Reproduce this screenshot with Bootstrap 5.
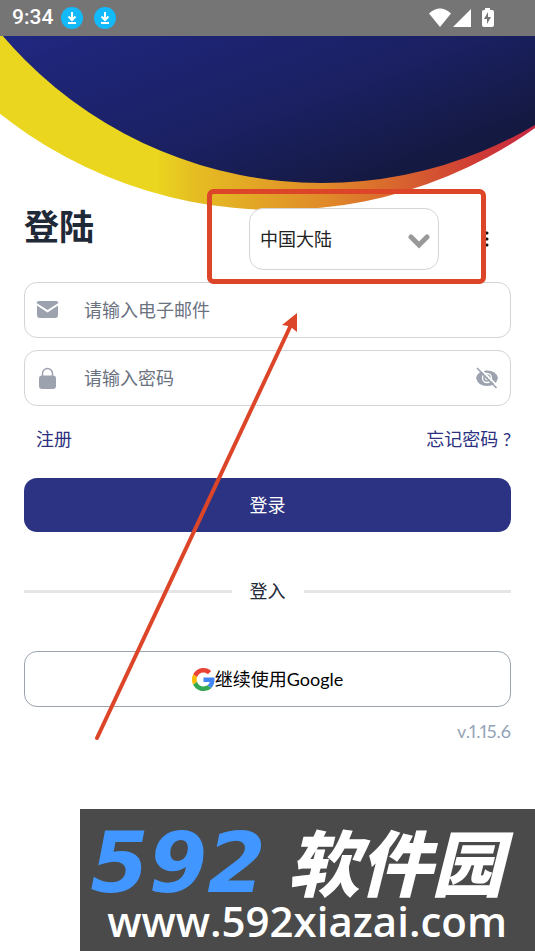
<!DOCTYPE html>
<html lang="zh-CN">
<head>
<meta charset="utf-8">
<meta name="viewport" content="width=device-width, initial-scale=1">
<title>登陆</title>
<link href="https://cdn.jsdelivr.net/npm/bootstrap@5.3.0/dist/css/bootstrap.min.css" rel="stylesheet">
<style>
body { font-family: Lato, "Noto Sans CJK SC", sans-serif; font-size: 18px; color: #1f2937; background: #fff; }
.status-strip { background: #757575; height: 36px; padding: 0 40px 0 12px; font-family: Roboto, sans-serif; font-size: 21px; font-weight: 500; }
.hero-arc { position: absolute; top: 0; left: 0; width: 100%; z-index: 0; }
.screen-body { padding: 172px 24px 0; z-index: 1; }
.page-title { font-size: 35px; line-height: 36px; font-weight: 700; }
.region-wrap { margin-right: 72px; }
.region-select { display: block; width: 190px; height: 62px; padding: 0 0 0 10px; border: 1px solid #d5d5d9; border-radius: 14px; font-size: 18px; color: #222; background: #fff; appearance: none; }
.chevron { position: absolute; right: 9px; top: 26px; pointer-events: none; }
.more-btn { position: absolute; right: 16px; top: 20px; }
.field { height: 56px; margin-top: 12px; border: 1px solid #d1d5d9; border-radius: 13px; padding: 0 12px 0 11px; background: #fff; }
.field input { font-size: 18px; margin-left: 25px; }
.field input::placeholder { color: #6b7280; opacity: 1; }
.auth-links { padding-left: 12px; margin-top: 19px; line-height: 28px; }
.auth-links a { color: #2b3180; }
.login-btn { height: 54px; margin-top: 25px; border-radius: 13px; background: #2c3382; color: #fff; font-size: 18px; }
.login-btn:hover { background: #232970; color: #fff; }
.divider { margin-top: 45px; line-height: 28px; gap: 18px; }
.divider-line { height: 3px; background: #e5e5e8; }
.google-btn { height: 56px; margin-top: 46px; border: 1px solid #9ca3af; border-radius: 13px; font-size: 18px; color: #000; background: #fff; }
.version { margin-top: 10px; line-height: 28px; color: #94a3b8; font-variant-numeric: proportional-nums; }
.notes { position: absolute; top: 0; left: 0; width: 100%; z-index: 3; pointer-events: none; }
.brand-strip { width: 85%; height: 142px; background: #4a4a4a; color: #fff; padding: 20px 0 0 10px; }
.brand-name { font-size: 72px; line-height: 68px; font-weight: 900; font-style: italic; gap: 22px; }
.brand-num { color: #4197ff; font-family: "DejaVu Sans", sans-serif; font-size: 84px; }
.brand-url { font-family: "Open Sans", sans-serif; font-size: 42px; line-height: 48px; font-weight: 600; padding-left: 17px; }
</style>
</head>
<body>
<div class="position-relative min-vh-100 d-flex flex-column overflow-hidden">
  <header class="status-strip d-flex align-items-center text-white">
    <span>9:34</span>
    <svg class="ms-2" width="55" height="22" viewBox="0 0 55 22" aria-hidden="true">
      <g id="dl"><circle cx="11" cy="11" r="11" fill="#12b9fb"/><path d="M11 5v8M7.500 9.500l3.500 3.500L14.500 9.500M7 16h8" fill="none" stroke="#fff" stroke-width="2"/></g>
      <use href="#dl" x="33"/>
    </svg>
    <svg class="ms-auto" width="66" height="22" viewBox="0 0 66 22" fill="#fff" aria-hidden="true">
      <path d="M0 6.500Q11-3.500 22 6.500L11 20zM24 20L42 2v18z"/>
      <path fill-rule="evenodd" d="M56 1h5v2h2q2 0 2 2v13q0 2-2 2h-8q-2 0-2-2V5q0-2 2-2h1zM59 5l-4 7h3v5l4-7h-3z"/>
    </svg>
  </header>

  <main class="position-relative">
    <svg class="hero-arc" viewBox="0 0 535 175" aria-hidden="true">
      <defs>
        <linearGradient id="ring" gradientUnits="userSpaceOnUse" x1="155" y1="0" x2="535" y2="0"><stop offset="0" stop-color="#ebd61f"/><stop offset=".1" stop-color="#e5be22"/><stop offset=".45" stop-color="#e08a29"/><stop offset=".85" stop-color="#cf3b34"/><stop offset="1" stop-color="#c62843"/></linearGradient>
        <linearGradient id="disc" gradientUnits="userSpaceOnUse" x1="180" y1="-60" x2="270" y2="180"><stop offset="0" stop-color="#20277f"/><stop offset=".65" stop-color="#1a2060"/><stop offset="1" stop-color="#141942"/></linearGradient>
      </defs>
      <circle cx="277" cy="-273" r="447" fill="url(#ring)"/>
      <circle cx="322" cy="-273" r="420" fill="url(#disc)"/>
    </svg>

    <form class="screen-body position-relative" onsubmit="return false">
      <div class="position-relative d-flex justify-content-between align-items-start">
        <h1 class="page-title mb-0">登陆</h1>
        <div class="region-wrap position-relative">
          <select class="region-select" aria-label="地区"><option>中国大陆</option></select>
          <svg class="chevron" width="22" height="16" viewBox="0 0 22 16" aria-hidden="true"><path d="M3 3l8 8 8-8" fill="none" stroke="#999" stroke-width="5" stroke-linecap="round"/></svg>
        </div>
        <button type="button" class="more-btn btn p-0 border-0 d-flex" aria-label="更多"><svg width="16" height="22" viewBox="0 0 16 22"><path d="M6 5h2M6 11h2M6 17h2" stroke="#111" stroke-width="3" stroke-linecap="round"/></svg></button>
      </div>

      <label class="field d-flex align-items-center" for="email">
        <svg class="flex-shrink-0" width="23" height="18" viewBox="0 0 23 18" aria-hidden="true"><path fill="#9ca3af" d="M3 0h17q2 0 2.500 2L11.500 9 .5 2Q1 0 3 0zM1 4.500L11.500 11.500 22 4.500V14q0 3-3 3H4q-3 0-3-3z"/></svg>
        <input id="email" type="email" class="form-control border-0 shadow-none p-0 bg-transparent" placeholder="请输入电子邮件">
      </label>
      <label class="field d-flex align-items-center" for="password">
        <svg class="flex-shrink-0" width="23" height="23" viewBox="0 0 23 23" aria-hidden="true"><path d="M6.500 11V6.500a5 5 0 0 1 10 0V11" fill="none" stroke="#9ca3af" stroke-width="1.500"/><rect x="3" y="8.500" width="17" height="13.500" rx="3" fill="#9ca3af"/></svg>
        <input id="password" type="password" class="form-control border-0 shadow-none p-0 bg-transparent" placeholder="请输入密码">
        <button type="button" class="btn p-0 border-0 d-flex" aria-label="显示密码"><svg width="22" height="22" viewBox="0 0 22 22"><path d="M0 11Q2 3.500 11 3.500T22 11q-2 8-11 8T0 11z" fill="#9ca3af"/><circle cx="11" cy="11" r="4.500" fill="none" stroke="#fff" stroke-width="1.300"/><circle cx="11" cy="11" r="1.800" fill="none" stroke="#fff"/><path d="M3 .5l19 19" stroke="#fff" stroke-width="1.800"/><path d="M1 1l19.500 20" stroke="#9ca3af" stroke-width="1.700"/></svg></button>
      </label>

      <nav class="auth-links d-flex justify-content-between" aria-label="账号">
        <a class="text-decoration-none" href="#">注册</a><a class="text-decoration-none" href="#">忘记密码 ?</a>
      </nav>
      <button type="submit" class="login-btn btn w-100 border-0 d-block">登录</button>
      <div class="divider d-flex align-items-center"><span class="divider-line flex-fill"></span><span>登入</span><span class="divider-line flex-fill"></span></div>
      <button type="button" class="google-btn btn w-100 d-flex align-items-center justify-content-center p-0">
        <svg width="23" height="23" viewBox="0 0 48 48" aria-hidden="true"><path fill="#EA4335" d="M24 9.500c3.540 0 6.710 1.220 9.210 3.600l6.850-6.850C35.900 2.380 30.470 0 24 0 14.620 0 6.510 5.380 2.560 13.220l7.980 6.190C12.430 13.720 17.740 9.500 24 9.500z"/><path fill="#4285F4" d="M46.980 24.550c0-1.570-.15-3.090-.38-4.550H24v9.020h12.940c-.58 2.960-2.260 5.480-4.780 7.180l7.730 6c4.510-4.180 7.090-10.360 7.090-17.650z"/><path fill="#FBBC05" d="M10.530 28.590A14.500 14.500 0 0 1 10.530 19.410l-7.980-6.190A24 24 0 0 0 2.560 34.780z"/><path fill="#34A853" d="M24 48c6.480 0 11.930-2.130 15.890-5.810l-7.730-6c-2.150 1.450-4.920 2.300-8.160 2.300-6.260 0-11.570-4.220-13.470-9.910l-7.980 6.190C6.510 42.620 14.620 48 24 48z"/></svg>
        <span>继续使用Google</span>
      </button>
      <p class="version text-end mb-0">v.1.15.6</p>
    </form>
  </main>

  <footer class="brand-strip ms-auto mt-auto text-nowrap overflow-hidden">
    <div class="brand-name d-flex"><span class="brand-num">592</span><span>软件园</span></div>
    <div class="brand-url">www.592xiazai.com</div>
  </footer>

  <svg class="notes" viewBox="0 0 535 951" aria-hidden="true">
    <rect x="209.500" y="191.500" width="274" height="90" rx="4" fill="none" stroke="#dd4528" stroke-width="5"/>
    <path d="M97 738L290 327" stroke="#dd4528" stroke-width="4" stroke-linecap="round"/>
    <path d="M297 313v19l-5-4-4-2-6-1z" fill="#dd4528"/>
  </svg>
</div>
<script src="https://cdn.jsdelivr.net/npm/bootstrap@5.3.0/dist/js/bootstrap.bundle.min.js"></script>
</body>
</html>
